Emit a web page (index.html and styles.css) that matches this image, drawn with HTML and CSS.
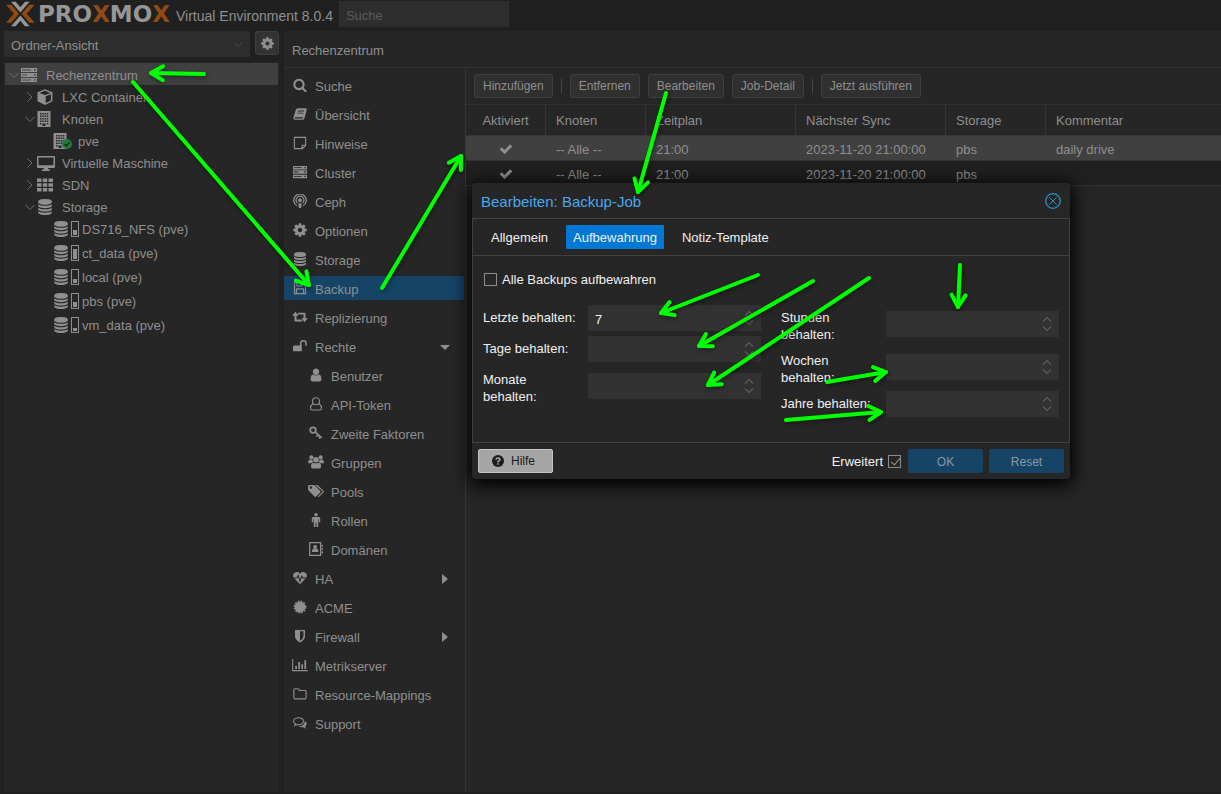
FILE: index.html
```html
<!DOCTYPE html>
<html lang="de">
<head>
<meta charset="utf-8">
<title>Proxmox Virtual Environment</title>
<link rel="stylesheet" href="styles.css">
</head>
<body>
<svg class="sprite" aria-hidden="true">
  <symbol id="i-search" viewBox="30 30 1732 1732"><path d="M1216 832q0-185-131.500-316.500t-316.500-131.500-316.500 131.500-131.500 316.500 131.500 316.500 316.500 131.500 316.500-131.500 131.500-316.500zm512 832q0 52-38 90t-90 38q-54 0-90-38l-343-342q-179 124-399 124-143 0-273.500-55.500t-225-150-150-225-55.500-273.500 55.500-273.500 150-225 225-150 273.500-55.500 273.500 55.500 225 150 150 225 55.500 273.500q0 220-124 399l343 343q37 37 37 90z"/></symbol>
  <symbol id="i-cog" viewBox="100 100 1592 1592"><path d="M1152 896q0-106-75-181t-181-75-181 75-75 181 75 181 181 75 181-75 75-181zm512-109v222q0 12-8 23t-20 13l-185 28q-19 54-39 91 35 50 107 138 10 12 10 25t-9 23q-27 37-99 108t-94 71q-12 0-26-9l-138-108q-44 23-91 38-16 136-29 186-7 28-36 28h-222q-14 0-24.500-8.500t-11.500-21.500l-28-184q-49-16-90-37l-141 107q-10 9-25 9-14 0-25-11-126-114-165-168-7-10-7-23 0-12 8-23 15-21 51-66.500t54-70.500q-27-50-41-99l-183-27q-13-2-21-12.500t-8-23.500v-222q0-12 8-23t19-13l186-28q14-46 39-92-40-57-107-138-10-12-10-24 0-10 9-23 26-36 98.500-107.500t94.500-71.500q13 0 26 10l138 107q44-23 91-38 16-136 29-186 7-28 36-28h222q14 0 24.500 8.500t11.500 21.500l28 184q49 16 90 37l142-107q9-9 24-9 13 0 25 10 129 119 165 170 7 8 7 22 0 12-8 23-15 21-51 66.500t-54 70.500q26 50 41 98l183 28q13 2 21 12.500t8 23.500z"/></symbol>
  <symbol id="i-database" viewBox="0 0 1792 1792"><path d="M896 768q237 0 443-43t325-127v170q0 69-103 128t-280 93.500-385 34.500-385-34.500-280-93.500-103-128v-170q119 84 325 127t443 43zm0 768q237 0 443-43t325-127v170q0 69-103 128t-280 93.500-385 34.500-385-34.500-280-93.500-103-128v-170q119 84 325 127t443 43zm0-384q237 0 443-43t325-127v170q0 69-103 128t-280 93.500-385 34.500-385-34.500-280-93.500-103-128v-170q119 84 325 127t443 43zm0-1152q208 0 385 34.500t280 93.500 103 128v128q0 69-103 128t-280 93.500-385 34.500-385-34.500-280-93.500-103-128v-128q0-69 103-128t280-93.500 385-34.500z"/></symbol>
  <symbol id="i-check" viewBox="0 0 1792 1792"><path d="M1671 566q0 40-28 68l-724 724-136 136q-28 28-68 28t-68-28l-136-136-362-362q-28-28-28-68t28-68l136-136q28-28 68-28t68 28l294 295 656-657q28-28 68-28t68 28l136 136q28 28 28 68z"/></symbol>
  <symbol id="i-user" viewBox="60 60 1672 1672"><path d="M1536 1399q0 109-62.500 187t-150.500 78h-854q-88 0-150.500-78t-62.500-187q0-85 8.500-160.500t31.500-152 58.500-131 94-89 134.500-34.500q131 128 313 128t313-128q76 0 134.500 34.500t94 89 58.500 131 31.500 152 8.500 160.500zm-256-887q0 159-112.500 271.500t-271.500 112.500-271.500-112.500-112.500-271.500 112.500-271.500 271.500-112.500 271.500 112.500 112.500 271.500z"/></symbol>
  <symbol id="i-user-o" viewBox="0 0 16 16"><path fill="none" stroke="currentColor" stroke-width="1.300" d="M5 7.500C2.800 8.500 1.700 10.500 1.700 12.900c0 1.200.8 2 2 2h8.600c1.200 0 2-.8 2-2 0-2.400-1.100-4.400-3.300-5.400M8 8.900a4 4 0 1 0 0-8 4 4 0 0 0 0 8z"/></symbol>
  <symbol id="i-server" viewBox="0 0 16 16"><path fill-rule="evenodd" d="M0 1h16v4H0zM1 2.500v1h9v-1zM13 2.200v1.600h1.600V2.200zM0 6h16v4H0zM1 7.500v1h5v-1zM13 7.200v1.600h1.600V7.200zM0 11h16v4H0zM1 12.500v1h9v-1zM13 12.200v1.600h1.600v-1.600z"/></symbol>
  <symbol id="i-cube" viewBox="0 0 16 16"><path fill-rule="evenodd" d="M8 .3l7.500 3v9L8 16 .5 12.300v-9zM8 1.800L2.500 3.900 8 6l5.500-2.100zM8.700 7.300v6.800l5.200-2.500V5.300z"/></symbol>
  <symbol id="i-building" viewBox="1 0 16 16"><path fill-rule="evenodd" d="M1.500 0h13v16h-13zM4 2v1.500h1.500V2zm2.300 0v1.500h1.500V2zm2.300 0v1.500h1.500V2zm2.200 0v1.500h1.500V2zM4 4.500V6h1.500V4.500zm2.300 0V6h1.500V4.500zm2.300 0V6h1.500V4.500zm2.200 0V6h1.500V4.500zM4 7v1.500h1.500V7zm2.300 0v1.500h1.500V7zm2.300 0v1.500h1.500V7zm2.200 0v1.500h1.500V7zM4 9.500V11h1.500V9.500zm2.300 0V11h1.500V9.500zm2.300 0V11h1.500V9.500zm2.200 0V11h1.500V9.500zM4 12v1.500h1.500V12zm2.500.5V15h3v-2.500zm4.300-.5v1.500h1.500V12z"/></symbol>
  <symbol id="i-desktop" viewBox="0 0 18 16"><path fill-rule="evenodd" d="M1 1h16q1 0 1 1v10q0 1-1 1h-6l.5 1.500H13V16H5v-1.500h1.500L7 13H1q-1 0-1-1V2q0-1 1-1zM1.500 2.500v7.700h15V2.500z"/></symbol>
  <symbol id="i-th" viewBox="0 0 16 14"><path d="M0 .5h4.500v3.600H0zM5.800.5h4.400v3.600H5.800zM11.500.5H16v3.600h-4.500zM0 5.200h4.500v3.600H0zM5.800 5.200h4.400v3.600H5.800zM11.500 5.200H16v3.600h-4.500zM0 9.900h4.500v3.600H0zM5.800 9.900h4.400v3.600H5.800zM11.500 9.900H16v3.600h-4.500z"/></symbol>
  <symbol id="i-book" viewBox="0 0 16 16"><path fill-rule="evenodd" d="M5.500 1.500H15q1 .3.800 1.400L13 13q-.4 1.500-2 1.500H2Q0 14.300.4 12.300L3.200 3.200Q3.700 1.600 5.500 1.500zM6 4l-.3 1h6.800l.3-1zM5.200 6.500l-.3 1h6.800l.3-1zM2 11.700q-.5 1.300.6 1.400h8.200q.6-.2.900-1.400z"/></symbol>
  <symbol id="i-note" viewBox="0 0 16 16"><path fill="none" stroke="currentColor" stroke-width="1.300" d="M1.600 1.600h12.800V11l-3.600 3.400H1.600zM14 10.600h-3.500V14"/></symbol>
  <symbol id="i-ceph" viewBox="0 0 16 16"><circle cx="8" cy="7" r="2.200"/><path d="M6 10.500h4L9.300 16H6.700z"/><path fill="none" stroke="currentColor" stroke-width="1.400" d="M4.500 13.500A7.200 7.200 0 1 1 11.500 13.500M5 10.300a4.500 4.500 0 1 1 6 0"/></symbol>
  <symbol id="i-floppy" viewBox="0 0 16 16"><path fill="none" stroke="currentColor" stroke-width="1.400" d="M1.700 1.700h10l2.600 2.600v10H1.700zM4 14V9h8v5M4.500 2v3.500h6V2"/><path d="M7.800 2h2v3h-2z"/></symbol>
  <symbol id="i-repeat" viewBox="0 0 18 16"><path d="M3.800 2L7.500 6.500H5v4.300h5.500L12 13H2.700V6.500H0zM14.200 14l-3.700-4.500H13V5.200H7.500L6 3h9.300v6.500H18z"/></symbol>
  <symbol id="i-unlock" viewBox="0 0 16 16"><path d="M1 7.500h9V14H1q-1 0-1-1V8.500q0-1 1-1z"/><path fill="none" stroke="currentColor" stroke-width="1.700" d="M8.800 8V5a3.100 3.100 0 0 1 6.200 0v2.800"/></symbol>
  <symbol id="i-key" viewBox="0 0 16 16"><path fill="none" stroke="currentColor" stroke-width="1.900" d="M7.500 7.200L14.500 13.500M10.500 10l-2 2.200M13 12.300l-1.600 1.800"/><circle cx="4.600" cy="4.700" r="3.200" fill="none" stroke="currentColor" stroke-width="2"/></symbol>
  <symbol id="i-users" viewBox="0 0 18 16"><circle cx="9" cy="5.500" r="3.200"/><circle cx="3.700" cy="2.700" r="2.300"/><circle cx="14.300" cy="2.700" r="2.300"/><path d="M5.500 8.500q3.500 2 7 0 2.500 1 2.300 5-.3 2-2 2H5.200q-1.700 0-2-2 0-4 2.300-5zM0 9q0-4 2-4 1.500.8 3 .3Q5 7 6 8 4.500 8.200 3.600 9.300H1.400Q0 9.300 0 9zM18 9q0-4-2-4-1.500.8-3 .3Q13 7 12 8q1.500.2 2.400 1.300h2.200q1.400 0 1.400-.3z"/></symbol>
  <symbol id="i-tags" viewBox="0 0 18 16"><path fill-rule="evenodd" d="M0 2.300Q0 1 1.300 1h4.500q1 0 2 .8l6 6q1 1 0 2l-4.500 4.500q-1 1-2 0l-6.500-6.500Q0 7 0 6.200zM3.300 2.700a1.300 1.300 0 1 0 0 2.700 1.300 1.300 0 0 0 0-2.700z"/><path d="M8 1h1.500q1 0 2 .8l6 6q1 1 0 2l-4.800 4.800q-.8.600-1.700-.3l5-5q.6-.6-.1-1.500z"/></symbol>
  <symbol id="i-male" viewBox="0 0 16 16"><circle cx="8" cy="2" r="2"/><path d="M4.500 4.500h7q1.300.3 1.300 1.500v4.500h-1.700V7h-.6v9H8.500v-5h-1v5h-2V7h-.6v3.500H3.200V6q0-1.200 1.300-1.500z"/></symbol>
  <symbol id="i-address" viewBox="0 0 16 16"><path fill="none" stroke="currentColor" stroke-width="1.400" d="M.8.800h12.500v14.400H.8z"/><circle cx="7" cy="5.500" r="2.200"/><path d="M5 7.500h4q1.800.8 1.800 4H3.200q0-3.200 1.800-4zM14.500 3H16v2.500h-1.500zM14.500 6.800H16v2.400h-1.500zM14.500 10.500H16V13h-1.500z"/></symbol>
  <symbol id="i-heart" viewBox="0 0 16 16"><path d="M8 15L.8 7.800Q-.5 5 .7 3 3 0 6.300 1.500L8 3l1.700-1.500Q13 0 15.300 3q1.200 2-.1 4.800z"/><path fill="none" stroke="#262626" stroke-width="1.200" d="M0 8h4.500L6 5l2 6.500L10 6l1.300 2H16"/></symbol>
  <symbol id="i-cert" viewBox="0 0 16 16"><circle cx="8" cy="8" r="6"/><circle cx="8" cy="8" r="6.500" fill="none" stroke="currentColor" stroke-width="1.700" stroke-dasharray="2 1.400"/></symbol>
  <symbol id="i-shield" viewBox="0 0 16 16"><path fill-rule="evenodd" d="M2.300 1h11.400v7q0 4.500-5.700 7.500Q2.300 12.500 2.300 8zM8 2.700v10.800q4-2.500 4-5.500V2.700z"/></symbol>
  <symbol id="i-chart" viewBox="0 0 18 16"><path d="M0 1h1.200v12.800H18V15H0zM3.500 9h2v3.500h-2zM7 4.500h2v8H7zM10.500 7h2v5.500h-2zM14 2.500h2v10h-2z"/></symbol>
  <symbol id="i-folder" viewBox="0 0 16 16"><path fill="none" stroke="currentColor" stroke-width="1.300" stroke-linejoin="round" d="M1 3.500Q1 2 2.500 2h3Q7 2 7 4h6.700Q15 4 15 5.300v7q0 1.300-1.300 1.300H2.500Q1 13.600 1 12.200z"/></symbol>
  <symbol id="i-comments" viewBox="0 0 16 16"><path fill="none" stroke="currentColor" stroke-width="1.200" d="M6.300 2C3.200 2 .7 3.700.7 6c0 1.400.9 2.500 2.200 3.200l-.8 1.700 2.500-1.100c4 .8 7.400-1.200 7.400-3.800 0-2.300-2.600-4-5.700-4z"/><path d="M13.500 5.300Q17 8 14.700 11q-.5.600-1 1 .5 1.300 1.600 2.200-2.200.1-3.600-1.300-3 .4-5.400-1.100 7.700-.2 7.200-6.500z"/></symbol>
  <symbol id="i-down" viewBox="0 0 12 8"><path fill="none" stroke="currentColor" d="M1.500 2L6 6.500 10.500 2"/></symbol>
  <symbol id="i-right" viewBox="0 0 8 12"><path fill="none" stroke="currentColor" d="M1.500 1.500L6 6l-4.500 4.500"/></symbol>
  <symbol id="i-spin" viewBox="0 0 10 16"><path fill="none" stroke="currentColor" stroke-width="1.200" d="M1 5.500L5 1.500l4 4M1 10.500l4 4 4-4"/></symbol>
  <symbol id="i-close" viewBox="0 0 16 16"><circle cx="8" cy="8" r="7.300" fill="none" stroke="currentColor" stroke-width="1.300"/><path fill="none" stroke="currentColor" d="M4.300 4.300l7.400 7.400M11.700 4.300l-7.400 7.400"/></symbol>
  <symbol id="i-help" viewBox="0 0 16 16"><circle cx="8" cy="8" r="8"/><path fill="none" stroke="#a5a5a5" stroke-width="2" d="M5.200 6.200Q5.500 4 8 4q2.600 0 2.600 2.100Q10.600 7.500 8 8.500V10M8 11v2"/></symbol>
</svg>

<header class="topbar">
  <div class="logo">
    <svg class="logo-mark" viewBox="18 2 87 77" aria-hidden="true"><path fill="#969696" d="M33 4h14l14 16L75 4h14L61 36zM33 77h14l14-16 14 16h14L61 45z"/><path fill="#914b12" d="M18 13h16l23 27-23 27H18l24-27zM104 13H88L65 40l23 27h16L80 40z"/></svg>
    <span class="logo-text">PRO<b>X</b>MO<b>X</b></span>
  </div>
  <span class="version">Virtual Environment 8.0.4</span>
  <input class="search" type="text" placeholder="Suche" aria-label="Suche">
</header>

<div class="workspace">
  <aside class="nav">
    <div class="nav-head">
      <div class="view-select">
        <select aria-label="Ansicht"><option>Ordner-Ansicht</option></select>
        <svg class="select-arrow"><use href="#i-down"/></svg>
      </div>
      <button class="gear" aria-label="Einstellungen"><svg><use href="#i-cog"/></svg></button>
    </div>
    <ul class="tree">
      <li class="node selected"><svg class="exp"><use href="#i-down"/></svg><svg class="ico"><use href="#i-server"/></svg><span>Rechenzentrum</span></li>
      <li class="node l1"><svg class="exp"><use href="#i-right"/></svg><svg class="ico"><use href="#i-cube"/></svg><span>LXC Container</span></li>
      <li class="node l1"><svg class="exp"><use href="#i-down"/></svg><svg class="ico"><use href="#i-building"/></svg><span>Knoten</span></li>
      <li class="node l2"><span class="online"><svg class="ico"><use href="#i-building"/></svg><svg class="badge" viewBox="0 0 10 10"><circle cx="5" cy="5" r="5" fill="#1f7a3a"/><path d="M2.500 5l2 2 3.200-3.700" fill="none" stroke="#262626" stroke-width="1.500"/></svg></span><span>pve</span></li>
      <li class="node l1"><svg class="exp"><use href="#i-right"/></svg><svg class="ico desk"><use href="#i-desktop"/></svg><span>Virtuelle Maschine</span></li>
      <li class="node l1"><svg class="exp"><use href="#i-right"/></svg><svg class="ico"><use href="#i-th"/></svg><span>SDN</span></li>
      <li class="node l1"><svg class="exp"><use href="#i-down"/></svg><svg class="ico"><use href="#i-database"/></svg><span>Storage</span></li>
      <li class="node store"><svg class="ico"><use href="#i-database"/></svg><i class="usage"><i style="height:5px"></i></i><span>DS716_NFS (pve)</span></li>
      <li class="node store"><svg class="ico"><use href="#i-database"/></svg><i class="usage"><i style="height:10px"></i></i><span>ct_data (pve)</span></li>
      <li class="node store"><svg class="ico"><use href="#i-database"/></svg><i class="usage"><i style="height:4px"></i></i><span>local (pve)</span></li>
      <li class="node store"><svg class="ico"><use href="#i-database"/></svg><i class="usage"><i style="height:5px"></i></i><span>pbs (pve)</span></li>
      <li class="node store"><svg class="ico"><use href="#i-database"/></svg><i class="usage"><i style="height:3px"></i></i><span>vm_data (pve)</span></li>
    </ul>
  </aside>

  <main class="main">
    <h1 class="crumb">Rechenzentrum</h1>
    <div class="split">
      <nav class="menu">
        <a href="#"><svg><use href="#i-search"/></svg>Suche</a>
        <a href="#"><svg><use href="#i-book"/></svg>Übersicht</a>
        <a href="#"><svg><use href="#i-note"/></svg>Hinweise</a>
        <a href="#"><svg><use href="#i-server"/></svg>Cluster</a>
        <a href="#"><svg><use href="#i-ceph"/></svg>Ceph</a>
        <a href="#"><svg><use href="#i-cog"/></svg>Optionen</a>
        <a href="#"><svg><use href="#i-database"/></svg>Storage</a>
        <a href="#" class="active"><svg><use href="#i-floppy"/></svg>Backup</a>
        <a href="#"><svg class="wide"><use href="#i-repeat"/></svg>Replizierung</a>
        <a href="#"><svg><use href="#i-unlock"/></svg>Rechte<i class="caret open"></i></a>
        <a href="#" class="sub"><svg><use href="#i-user"/></svg>Benutzer</a>
        <a href="#" class="sub"><svg><use href="#i-user-o"/></svg>API-Token</a>
        <a href="#" class="sub"><svg><use href="#i-key"/></svg>Zweite Faktoren</a>
        <a href="#" class="sub"><svg class="wide"><use href="#i-users"/></svg>Gruppen</a>
        <a href="#" class="sub"><svg class="wide"><use href="#i-tags"/></svg>Pools</a>
        <a href="#" class="sub"><svg><use href="#i-male"/></svg>Rollen</a>
        <a href="#" class="sub"><svg><use href="#i-address"/></svg>Domänen</a>
        <a href="#"><svg><use href="#i-heart"/></svg>HA<i class="caret"></i></a>
        <a href="#"><svg><use href="#i-cert"/></svg>ACME</a>
        <a href="#"><svg><use href="#i-shield"/></svg>Firewall<i class="caret"></i></a>
        <a href="#"><svg class="wide"><use href="#i-chart"/></svg>Metrikserver</a>
        <a href="#"><svg><use href="#i-folder"/></svg>Resource-Mappings</a>
        <a href="#"><svg><use href="#i-comments"/></svg>Support</a>
      </nav>

      <section class="content">
        <div class="toolbar">
          <button>Hinzufügen</button><i class="sep"></i>
          <button>Entfernen</button><button>Bearbeiten</button><button>Job-Detail</button><i class="sep"></i>
          <button>Jetzt ausführen</button>
        </div>
        <table class="grid">
          <colgroup><col class="c80"><col class="c100"><col class="c150"><col class="c150"><col class="c100"><col></colgroup>
          <thead><tr><th class="mid">Aktiviert</th><th>Knoten</th><th>Zeitplan</th><th>Nächster Sync</th><th>Storage</th><th>Kommentar</th></tr></thead>
          <tbody>
            <tr class="selected"><td class="mid"><svg><use href="#i-check"/></svg></td><td>-- Alle --</td><td>21:00</td><td>2023-11-20 21:00:00</td><td>pbs</td><td>daily drive</td></tr>
            <tr><td class="mid"><svg><use href="#i-check"/></svg></td><td>-- Alle --</td><td>21:00</td><td>2023-11-20 21:00:00</td><td>pbs</td><td></td></tr>
          </tbody>
        </table>
      </section>
    </div>
  </main>
</div>

<form class="dialog" role="dialog" aria-labelledby="dlg-title">
  <div class="dlg-head">
    <h2 id="dlg-title">Bearbeiten: Backup-Job</h2>
    <button type="button" class="close" aria-label="Schließen"><svg><use href="#i-close"/></svg></button>
  </div>
  <div class="dlg-body">
    <div class="tabs">
      <button type="button">Allgemein</button>
      <button type="button" class="active">Aufbewahrung</button>
      <button type="button">Notiz-Template</button>
    </div>
    <div class="fields">
      <label class="check"><input type="checkbox">Alle Backups aufbewahren</label>
      <div class="columns">
        <div class="column">
          <div class="field"><label for="k-last">Letzte behalten:</label><div class="spin"><input id="k-last" type="text" value="7"><svg><use href="#i-spin"/></svg></div></div>
          <div class="field"><label for="k-day">Tage behalten:</label><div class="spin"><input id="k-day" type="text"><svg><use href="#i-spin"/></svg></div></div>
          <div class="field"><label for="k-month">Monate behalten:</label><div class="spin"><input id="k-month" type="text"><svg><use href="#i-spin"/></svg></div></div>
        </div>
        <div class="column">
          <div class="field"><label for="k-hour">Stunden behalten:</label><div class="spin"><input id="k-hour" type="text"><svg><use href="#i-spin"/></svg></div></div>
          <div class="field"><label for="k-week">Wochen behalten:</label><div class="spin"><input id="k-week" type="text"><svg><use href="#i-spin"/></svg></div></div>
          <div class="field"><label for="k-year">Jahre behalten:</label><div class="spin"><input id="k-year" type="text"><svg><use href="#i-spin"/></svg></div></div>
        </div>
      </div>
    </div>
  </div>
  <div class="dlg-foot">
    <button type="button" class="help"><svg><use href="#i-help"/></svg>Hilfe</button>
    <label class="advanced">Erweitert<input type="checkbox" checked></label>
    <button type="button" class="primary">OK</button>
    <button type="button" class="primary">Reset</button>
  </div>
</form>

<svg class="arrows" aria-hidden="true">
  <defs>
    <marker id="tip" orient="auto" markerUnits="userSpaceOnUse" markerWidth="40" markerHeight="40" overflow="visible"><path d="M-12-7L0 0-12 7"/></marker>
  </defs>
  <path d="M204 74L151 73"/>
  <path d="M133 82L309 285"/>
  <path d="M382 288L461 156"/>
  <path d="M666 93L638 192"/>
  <path d="M758 275L661 313"/>
  <path d="M813 281L699 346"/>
  <path d="M869 278L708 385"/>
  <path d="M960 265L958 307"/>
  <path d="M827 382L886 372"/>
  <path d="M786 420L881 412"/>
</svg>
</body>
</html>
```
FILE: styles.css
```css
* { box-sizing: border-box; }
body {
  margin: 0;
  min-height: 100vh;
  display: flex;
  flex-direction: column;
  background: #202020;
  color: #8f8f8f;
  font: 13px/17px "Liberation Sans", Arial, sans-serif;
  position: relative;
  overflow: hidden;
}
button, input, select { font: inherit; color: inherit; margin: 0; }
svg { fill: currentColor; flex: none; }
.sprite { position: absolute; width: 0; height: 0; }

/* Top bar */
.topbar { display: flex; align-items: center; height: 31px; padding: 0 6px 3px; }
.logo { display: flex; align-items: center; gap: 3px; }
.logo-mark { width: 29px; height: 26px; }
.logo-text { font: bold 23px/28px "DejaVu Sans", sans-serif; width: 135px; color: #969696; }
.logo-text b { color: #914b12; }
.version { font-size: 14px; margin: 4px 6px 0 3px; }
.search { width: 170px; height: 26px; padding: 2px 7px 0; border: 0; background: #2d2d2d; }
.search::placeholder { color: #5c5c5c; opacity: 1; }

.workspace { flex: 1; display: flex; gap: 5px; padding: 0 0 2px 4px; }

/* Resource tree */
.nav { width: 275px; flex: none; display: flex; flex-direction: column; gap: 5px; }
.nav-head { display: flex; gap: 5px; align-items: flex-start; }
.view-select { flex: 1; position: relative; }
.view-select select { width: 100%; height: 26px; padding: 2px 7px 0; border: 0; background: #2d2d2d; appearance: none; }
.select-arrow { position: absolute; right: 6px; top: 9px; width: 12px; height: 8px; color: #4c4c4c; }
.gear { width: 24px; height: 24px; padding: 0; display: grid; place-items: center; background: #333; border: 1px solid #3e3e3e; border-radius: 3px; }
.gear svg { width: 13px; height: 13px; }
.tree { flex: 1; list-style: none; margin: 0; padding: 1px; background: #262626; }
.node { display: flex; align-items: center; height: 22px; padding: 1px 0 0 3px; }
.node > span:last-child { padding-top: 1px; }
.node.selected { background: #404040; }
.node.l1 { padding-left: 19px; }
.node.l2 { padding-left: 48px; }
.node.store { height: 24px; padding: 0 0 0 48px; }
.exp { width: 12px; height: 8px; margin-right: 1px; color: #6d6d6d; }
.l1 .exp { height: 12px; }
.ico { width: 16px; height: 16px; margin-right: 9px; }
.ico.desk { width: 18px; margin-right: 7px; }
.store .ico { margin-right: 2px; }
.online { position: relative; display: flex; }
.badge { position: absolute; left: 9px; top: 6px; width: 10px; height: 10px; }
.usage { width: 8px; height: 16px; margin-right: 3px; padding: 1px; border: 1px solid #8f8f8f; display: flex; align-items: flex-end; }
.usage i { flex: 1; background: #8f8f8f; }

/* Main panel */
.main { flex: 1; min-width: 0; display: flex; flex-direction: column; background: #262626; }
.crumb { margin: 0; padding: 11px 8px 8px; font: inherit; border-bottom: 1px solid #323232; }
.split { flex: 1; display: flex; }
.menu { width: 182px; flex: none; display: flex; flex-direction: column; gap: 5px; padding: 5px 1px 0 0; border-right: 1px solid #363636; }
.menu a { display: flex; align-items: center; height: 24px; padding: 2px 0 0 9px; color: inherit; text-decoration: none; }
.menu a.sub { padding-left: 25px; }
.menu a.active { background: #154467; }
.menu svg { width: 14px; height: 14px; margin: 0 8px 3px 0; }
.menu svg.wide { width: 16px; margin: 0 7px 3px -1px; }
.caret { margin: 0 16px 0 auto; border: 5px solid transparent; border-left: 6px solid #8f8f8f; border-right: 0; }
.caret.open { margin-right: 14px; border: 5px solid transparent; border-top: 5px solid #8f8f8f; border-bottom: 0; }

.content { flex: 1; min-width: 0; }
.toolbar { display: flex; align-items: center; gap: 8px; padding: 0 8px 1px; height: 36px; }
.toolbar button { height: 24px; padding: 1px 8px 0; font-size: 12px; white-space: nowrap; background: #303030; border: 1px solid #3e3e3e; border-radius: 3px; }
.sep { width: 1px; height: 14px; background: #454545; }
.grid { width: 100%; table-layout: fixed; border-collapse: separate; border-spacing: 0; border-top: 1px solid #303030; }
.c80 { width: 80px; }
.c100 { width: 100px; }
.c150 { width: 150px; }
.grid th { height: 31px; padding: 1px 10px 0; font-weight: normal; text-align: left; border-right: 1px solid #363636; border-bottom: 1px solid #363636; }
.grid th:last-child { border-right: 0; }
.grid td { height: 25px; padding: 2px 10px 0; background: #202020; border-bottom: 1px solid #323232; }
.grid .selected td { background: #404040; }
.grid .mid { text-align: center; }
.grid svg { display: block; width: 14px; height: 14px; margin: 0 auto; }

/* Dialog */
.dialog { position: absolute; left: 472px; top: 183px; width: 598px; background: #262626; color: #f0f0f0; border-radius: 3px; box-shadow: 0 4px 18px 3px #000; }
.dlg-head { display: flex; align-items: center; justify-content: space-between; height: 35px; padding: 0 9px; }
.dlg-head h2 { margin: 0; padding-top: 2px; font: 15px/18px "Liberation Sans", Arial, sans-serif; color: #4ba6ec; }
.close { width: 16px; height: 16px; padding: 0; border: 0; background: none; color: #2a93c4; }
.close svg { display: block; width: 16px; height: 16px; }
.dlg-body { border: 1px solid #414141; min-height: 225px; }
.tabs { display: flex; gap: 11px; padding: 6px 11px; border-bottom: 1px solid #414141; }
.tabs button { height: 24px; padding: 1px 7px 0; border: 0; border-radius: 1px; background: none; }
.tabs .active { background: #0078d4; }
.fields { padding: 10px; }
.check { display: flex; align-items: center; gap: 5px; height: 26px; margin-bottom: 13px; padding-left: 1px; }
input[type="checkbox"] { appearance: none; position: relative; width: 13px; height: 13px; border: 1px solid #8c8c8c; background: transparent; }
input[type="checkbox"]:checked::after { content: ""; position: absolute; left: 4px; top: 0; width: 4px; height: 8px; border: solid #9a9a9a; border-width: 0 1px 1px 0; transform: rotate(40deg); }
.columns { display: grid; grid-template-columns: 1fr 1fr; gap: 20px; }
.column { display: flex; flex-direction: column; gap: 5px; }
.field { display: flex; align-items: center; }
.field label { width: 105px; flex: none; padding: 4px 12px 0 0; align-self: flex-start; }
.spin { flex: 1; position: relative; }
.spin input { display: block; width: 100%; height: 26px; padding: 2px 24px 0 7px; border: 0; background: #323232; }
.spin svg { position: absolute; right: 7px; top: 5px; width: 10px; height: 16px; color: #5c5c5c; }
.dlg-foot { display: flex; align-items: center; gap: 6px; padding: 6px; }
.dlg-foot button { width: 75px; height: 24px; padding: 2px 0 0; font-size: 12px; border-radius: 2px; }
.dlg-foot .help { display: flex; align-items: center; padding: 1px 0 0 13px; gap: 7px; background: #a5a5a5; border: 1px solid #c4c4c4; color: #1c1c1c; }
.help svg { width: 12px; height: 12px; margin-bottom: 1px; }
.advanced { display: flex; align-items: center; gap: 5px; margin: 0 1px 0 auto; padding-top: 1px; }
.dlg-foot .primary { border: 0; background: #154467; color: #8b98a2; }

/* Arrow annotations */
.arrows { position: absolute; left: 0; top: 0; width: 100%; height: 100%; pointer-events: none; fill: none; stroke: #0f0; stroke-width: 4; stroke-linecap: round; stroke-linejoin: round; filter: drop-shadow(1px 2px 2px rgba(0, 0, 0, 0.4)); }
.arrows > path { marker-end: url(#tip); }
```
